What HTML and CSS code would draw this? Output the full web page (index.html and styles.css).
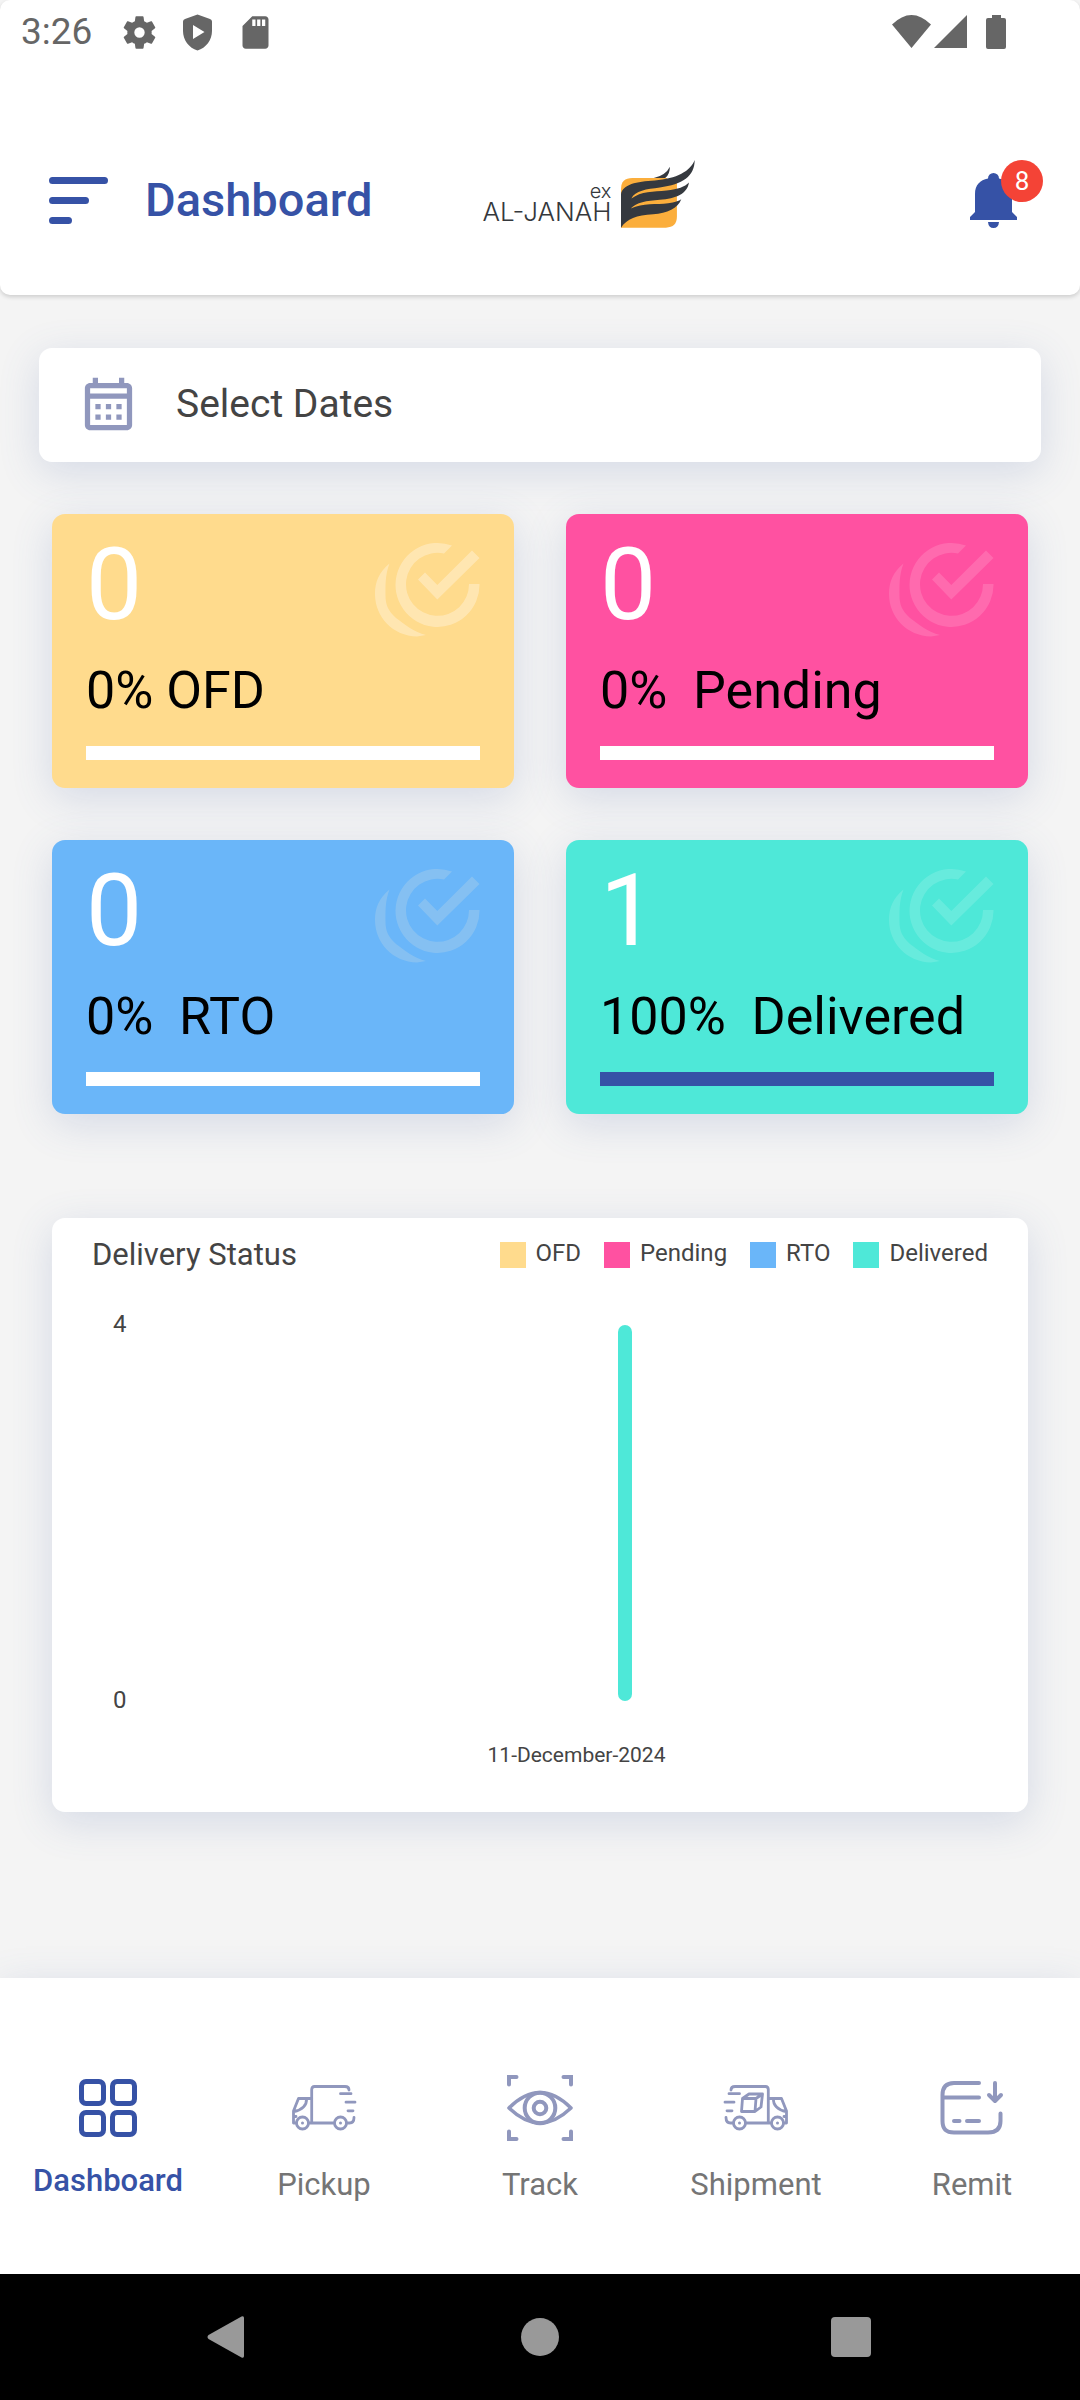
FILE: index.html
```html
<!DOCTYPE html>
<html lang="en">
<head>
<meta charset="utf-8">
<meta name="viewport" content="width=device-width, initial-scale=1">
<title>Dashboard</title>
<link rel="stylesheet" href="styles.css">
</head>
<body>
<svg class="sprite" aria-hidden="true">
  <symbol id="done" viewBox="0 0 105 95">
    <path d="M77 3.500A42 42 0 1 0 104.500 42H94A31.500 31.500 0 1 1 69 11.500Z"/>
    <path d="M43 37.500L50 30.500L62.300 43L97 8.500L104.500 16L62.300 57.500Z"/>
    <path d="M14.500 21.500C4 30 0 40 0 52C0 75 18 94 42 94.500L51 93C39 90 29 82 21 76C13 69 10.500 62 10.500 54C10.500 44 10 33 14.500 21.500Z"/>
  </symbol>
  <symbol id="truck" viewBox="0 0 65 46">
    <g fill="none" stroke="currentColor" stroke-width="2.800" stroke-linecap="round" stroke-linejoin="round">
      <path d="M19.700 38V4.500Q19.700 1.500 22.500 1.500H53Q57 1.500 57 5M17 38H42M55 38H57.500Q62 38 62 32.500"/>
      <path d="M19.700 13.500H6.500L1.500 26V38H4M14.500 14C15 20 10 25 2 26.500M2 31.500H4"/>
      <path d="M48.500 8.700H59M54 17.200H63M56 25.800H61"/>
      <circle cx="10.500" cy="38" r="6"/><circle cx="48.500" cy="38" r="6"/>
    </g>
    <circle cx="10.500" cy="38" r="1.500"/><circle cx="48.500" cy="38" r="1.500"/>
  </symbol>
</svg>

<div class="screen">
  <header class="top">
    <div class="status">
      <span class="clock">3:26</span>
      <svg class="status-icon" viewBox="0 0 24 24"><path d="M19.430 12.980c.04-.32.07-.64.07-.98s-.03-.66-.07-.98l2.110-1.650c.19-.15.24-.42.12-.64l-2-3.460c-.12-.22-.39-.3-.61-.22l-2.490 1c-.52-.4-1.080-.73-1.690-.98l-.38-2.650A.49.490 0 0 0 14 2h-4c-.25 0-.46.180-.49.420l-.38 2.650c-.61.250-1.170.590-1.690.980l-2.490-1c-.23-.09-.49 0-.61.220l-2 3.460c-.13.220-.07.490.12.640l2.110 1.650c-.04.320-.07.650-.07.980s.03.660.07.980l-2.110 1.650c-.19.150-.24.420-.12.640l2 3.460c.12.220.39.300.61.220l2.490-1c.52.400 1.080.730 1.690.980l.38 2.650c.03.240.24.420.49.420h4c.25 0 .46-.18.49-.42l.38-2.650c.61-.25 1.170-.59 1.690-.98l2.490 1c.23.090.49 0 .61-.22l2-3.460c.12-.22.07-.49-.12-.64zM12 15.200A3.200 3.200 0 1 1 12 8.800a3.200 3.200 0 0 1 0 6.400z"/></svg>
      <svg class="status-icon" viewBox="0 0 39 39"><path fill-rule="evenodd" d="M19.500 1.500L32 6Q34 6.700 34 8.500V18C34 27 28 35 19.500 37.500C11 35 5 27 5 18V8.500Q5 6.700 7 6ZM15 12V26L26.500 19Z"/></svg>
      <svg class="status-icon" viewBox="0 0 24 24"><path d="M18 2h-8L4 8v12c0 1.100.9 2 2 2h12c1.100 0 2-.9 2-2V4c0-1.100-.9-2-2-2zm-6 6h-2V4h2v4zm3 0h-2V4h2v4zm3 0h-2V4h2v4z"/></svg>
      <svg class="signals" viewBox="0 0 114 34"><path d="M0 9.500Q19.500-9.500 39 9.500L19.500 33ZM42 33L75 0V33ZM100 0h9v3h3q2 0 2 2v27q0 2-2 2H96q-2 0-2-2V5q0-2 2-2h4Z"/></svg>
    </div>
    <div class="appbar">
      <button class="plain menu" aria-label="Open menu"><svg viewBox="0 0 59 47"><path d="M3.500 3.500H55.500M3.500 23.500H36.500M3.500 43.500H19.500"/></svg></button>
      <h1 class="title">Dashboard</h1>
      <div class="brand">
        <div class="brand-name"><span class="brand-ex">ex</span><span>AL-JANAH</span></div>
        <svg class="brand-mark" viewBox="484 63 221 203">
          <path class="mark-box" d="M484 265V150Q484 117 518 117H651V232Q651 265 618 265Z"/>
          <path class="mark-cover" d="M622 110H655V130H622Z"/>
          <path class="mark-wing" d="M582 117Q618 108 630 83Q630 106 616 117ZM484 265V165C488 136 530 127 585 124C650 119 692 96 704 63C704 112 668 136 600 145C560 150 526 154 515 178C545 156 580 158 620 154C655 150 674 143 687 130C682 164 648 178 600 182C560 185 530 190 513 208C550 190 590 197 625 192C645 189 657 185 664 180C654 208 622 221 580 225C530 228 502 238 484 265Z"/>
        </svg>
      </div>
      <button class="plain bell" aria-label="Notifications">
        <svg viewBox="0 0 47 55"><path d="M0 47V44L5 39V21C5 12 10 7 18 5.500A5.500 5.500 0 0 1 29 5.500C37 7 42 12 42 21V39L47 44V47ZM18 49H29Q28.500 55 23.500 55T18 49Z"/></svg>
        <span class="badge">8</span>
      </button>
    </div>
  </header>

  <main class="content">
    <button class="plain dates">
      <svg viewBox="0 0 24 24"><path d="M7 11H9V13H7V11M21 5V19C21 20.100 20.100 21 19 21H5C3.890 21 3 20.100 3 19V5C3 3.900 3.900 3 5 3H6V1H8V3H16V1H18V3H19C20.100 3 21 3.900 21 5M5 7H19V5H5V7M19 19V9H5V19H19M15 13V11H17V13H15M11 13V11H13V13H11M7 15H9V17H7V15M15 17V15H17V17H15M11 17V15H13V17H11Z"/></svg>
      <span>Select Dates</span>
    </button>

    <section class="stats">
      <article class="stat ofd">
        <div class="stat-head"><span class="count">0</span><svg class="done"><use href="#done"/></svg></div>
        <p class="stat-label">0% OFD</p>
        <div class="track"><div class="fill" style="width:0%"></div></div>
      </article>
      <article class="stat pending">
        <div class="stat-head"><span class="count">0</span><svg class="done"><use href="#done"/></svg></div>
        <p class="stat-label">0%  Pending</p>
        <div class="track"><div class="fill" style="width:0%"></div></div>
      </article>
      <article class="stat rto">
        <div class="stat-head"><span class="count">0</span><svg class="done"><use href="#done"/></svg></div>
        <p class="stat-label">0%  RTO</p>
        <div class="track"><div class="fill" style="width:0%"></div></div>
      </article>
      <article class="stat delivered">
        <div class="stat-head"><span class="count">1</span><svg class="done"><use href="#done"/></svg></div>
        <p class="stat-label">100%  Delivered</p>
        <div class="track"><div class="fill" style="width:100%"></div></div>
      </article>
    </section>

    <section class="chart">
      <div class="chart-head">
        <h2 class="chart-title">Delivery Status</h2>
        <ul class="legend">
          <li><i class="swatch ofd"></i>OFD</li>
          <li><i class="swatch pending"></i>Pending</li>
          <li><i class="swatch rto"></i>RTO</li>
          <li><i class="swatch delivered"></i>Delivered</li>
        </ul>
      </div>
      <div class="plot">
        <div class="axis"><span>4</span><span>0</span></div>
        <div class="bars">
          <div class="bar ofd" style="height:0%"></div>
          <div class="bar pending" style="height:0%"></div>
          <div class="bar rto" style="height:0%"></div>
          <div class="bar delivered" style="height:100%"></div>
        </div>
        <div class="day">11-December-2024</div>
      </div>
    </section>
  </main>

  <nav class="tabs">
    <a class="tab active" href="#dashboard">
      <svg class="tab-icon" viewBox="0 0 66 66"><g fill="none" stroke="currentColor" stroke-width="5"><rect x="6.500" y="6.500" width="22" height="22" rx="4.500"/><rect x="37.500" y="6.500" width="22" height="22" rx="4.500"/><rect x="6.500" y="37.500" width="22" height="22" rx="4.500"/><rect x="37.500" y="37.500" width="22" height="22" rx="4.500"/></g></svg>
      <span>Dashboard</span>
    </a>
    <a class="tab" href="#pickup">
      <svg class="tab-icon" viewBox="0 0 66 66"><use href="#truck" x="1" y="10" width="65" height="46"/></svg>
      <span>Pickup</span>
    </a>
    <a class="tab" href="#track">
      <svg class="tab-icon" viewBox="0 0 66 66"><g fill="none" stroke="currentColor" stroke-width="4" stroke-linecap="round"><path d="M2 9.500V2H9.500M56.500 2H64V9.500M2 56.500V64H9.500M56.500 64H64V56.500"/><path stroke-width="3.500" stroke-linejoin="round" d="M2 33C12 23 22 17.500 33 17.500S54 23 64 33C54 42.500 44 48 33 48S12 42.500 2 33Z"/><circle cx="33" cy="33" r="15.300"/><circle cx="33" cy="33" r="6.300"/></g></svg>
      <span>Track</span>
    </a>
    <a class="tab" href="#shipment">
      <svg class="tab-icon" viewBox="0 0 66 66"><use href="#truck" x="1" y="10" width="65" height="46" transform="matrix(-1 0 0 1 66 0)"/><path fill="none" stroke="currentColor" stroke-width="2.800" stroke-linejoin="round" d="M19.500 23.500H33L32 36.500H18.500ZM19.500 23.500L26 19H39.500L33 23.500M39.500 19L38 32L32 36.500"/></svg>
      <span>Shipment</span>
    </a>
    <a class="tab" href="#remit">
      <svg class="tab-icon" viewBox="0 0 66 66"><path fill="none" stroke="currentColor" stroke-width="4" stroke-linecap="round" stroke-linejoin="round" d="M40 8H15C7 8 3.500 12 3.500 20V46C3.500 54 7 57.500 15 57.500H49C57 57.500 61.500 54 61.500 46V38.500M4 22.500H40M15 46H20.500M28 46H40M56 8V25M50 20L56 26L62 20"/></svg>
      <span>Remit</span>
    </a>
  </nav>

  <div class="system">
    <button class="plain key" aria-label="Back"><svg viewBox="0 0 42 42"><path d="M37 2V40Q37 42.500 34.500 41.500L1.500 23Q-.5 21 1.500 19L34.500.5Q37-.5 37 2Z"/></svg></button>
    <button class="plain key" aria-label="Home"><svg viewBox="0 0 42 42"><circle cx="21" cy="21" r="19"/></svg></button>
    <button class="plain key" aria-label="Recent apps"><svg viewBox="0 0 42 42"><rect x="0" y="1" width="40" height="40" rx="4"/></svg></button>
  </div>
</div>
</body>
</html>
```
FILE: styles.css
```css
:root {
  --blue: #3652a6;
  --muted: #9097bd;
  --text: #444;
  --grey: #757575;
  --shadow: 0 10px 40px rgba(79, 104, 169, .19);
}

* { box-sizing: border-box; }

body {
  margin: 0;
  background: #f4f4f4;
  color: var(--text);
  font-family: Roboto, "Liberation Sans", sans-serif;
}

h1, h2, p, ul { margin: 0; padding: 0; font-weight: 400; }
svg { display: block; flex: none; fill: currentColor; }
.sprite { position: absolute; width: 0; height: 0; }

.plain {
  padding: 0;
  border: 0;
  background: none;
  color: inherit;
  font: inherit;
  cursor: pointer;
}

.screen { display: flex; flex-direction: column; min-height: 100vh; }

/* status bar and app bar */
.top {
  background: #fff;
  border-radius: 10px;
  box-shadow: 0 2px 4px rgba(0, 0, 0, .16);
}

.status {
  display: flex;
  align-items: center;
  gap: 19px;
  padding: 10px 74px 9px 21px;
  color: #666;
}
.clock { margin-right: 9px; font-size: 37px; line-height: 44px; }
.status-icon { width: 39px; height: 39px; }
.signals { width: 114px; height: 34px; margin-left: auto; }

.appbar {
  display: flex;
  align-items: center;
  padding: 109px 63px 67px 49px;
  color: var(--blue);
}
.menu svg {
  width: 59px;
  height: 47px;
  fill: none;
  stroke: currentColor;
  stroke-width: 7;
  stroke-linecap: round;
}
.title { margin-left: 37px; font-size: 47px; font-weight: 500; line-height: 56px; }
.brand { display: flex; justify-content: flex-end; gap: 10px; width: 218px; margin-left: 105px; }
.brand-name {
  display: flex;
  flex-direction: column;
  align-items: flex-end;
  align-self: flex-end;
  padding-bottom: 4px;
  color: #35383c;
  font-family: Inter, sans-serif;
  font-size: 26px;
  font-weight: 300;
  line-height: 24px;
}
.brand-ex { font-size: 20px; line-height: 18px; }
.brand-mark { width: 74px; height: 68px; margin-top: -12px; }
.mark-box { fill: #fbae3c; }
.mark-cover { fill: #fff; }
.mark-wing { fill: #35393f; }

.bell { position: relative; margin-left: auto; }
.bell svg { width: 47px; height: 55px; }
.badge {
  position: absolute;
  top: -13px;
  left: 31px;
  width: 42px;
  border-radius: 50%;
  background: #f44336;
  color: #fff;
  font-size: 26px;
  line-height: 42px;
  text-align: center;
}

/* dashboard content */
.content { flex: 1; padding: 53px 39px 64px; }

.dates {
  display: flex;
  align-items: flex-start;
  gap: 36px;
  width: 100%;
  padding: 27px 38px 24px;
  border-radius: 13px;
  background: #fff;
  box-shadow: var(--shadow);
  font-size: 39px;
  line-height: 58px;
}
.dates svg { width: 63px; height: 63px; color: var(--muted); }

.stats {
  display: grid;
  grid-template-columns: 1fr 1fr;
  gap: 52px;
  padding: 52px 13px 0;
}
.stat {
  padding: 13px 34px 28px;
  border-radius: 13px;
  box-shadow: var(--shadow);
}
.ofd { background: #ffdb8d; }
.pending { background: #ff51a1; }
.rto { background: #6ab6f9; }
.delivered { background: #4ee8d8; }

.stat-head { display: flex; align-items: center; justify-content: space-between; color: #fff; }
.count { font-size: 100px; line-height: 116px; }
.done { width: 105px; height: 95px; margin-bottom: -8px; opacity: .14; }
.ofd .done { opacity: .32; }
.rto .done { color: #fff0d8; opacity: .18; }
.stat-label {
  margin-top: 17px;
  color: #000;
  font-size: 52px;
  line-height: 62px;
  white-space: pre;
}
.track { margin-top: 24px; background: #fff; }
.fill { height: 14px; background: var(--blue); }

.chart {
  margin: 104px 13px 0;
  padding: 19px 16px 45px 40px;
  border-radius: 13px;
  background: #fff;
  box-shadow: var(--shadow);
}
.chart-head { display: flex; justify-content: space-between; padding-right: 24px; }
.chart-title { font-size: 31px; line-height: 36px; }
.legend { display: flex; gap: 23px; padding-top: 2px; list-style: none; font-size: 24px; line-height: 28px; }
.legend li { display: flex; gap: 10px; }
.swatch { width: 26px; height: 26px; margin-top: 3px; }

.plot {
  display: grid;
  grid-template-columns: 28px 1fr;
  padding: 37px 0 0 21px;
}
.axis {
  display: flex;
  flex-direction: column;
  justify-content: space-between;
  font-size: 24px;
  line-height: 28px;
}
.bars {
  display: flex;
  align-items: flex-end;
  justify-content: center;
  gap: 18px;
  height: 404px;
  padding: 15px 0 13px;
}
.bar { width: 14px; border-radius: 7px; }
.day { grid-column: 2; margin-top: 29px; font-size: 21px; line-height: 24px; text-align: center; }

/* bottom navigation */
.tabs {
  display: flex;
  padding: 97px 0 70px;
  background: #fff;
  box-shadow: var(--shadow);
}
.tab {
  display: flex;
  flex: 1;
  flex-direction: column;
  align-items: center;
  gap: 25px;
  color: var(--grey);
  font-size: 31px;
  line-height: 38px;
  text-decoration: none;
}
.tab-icon { width: 66px; height: 66px; color: var(--muted); }
.active { gap: 21px; color: var(--blue); font-weight: 500; }
.active .tab-icon { color: var(--blue); }

.system { display: flex; padding: 0 72px; background: #000; color: #999; }
.key { display: flex; flex: 1; justify-content: center; padding: 42px 0; }
.key svg { width: 42px; height: 42px; }
```
